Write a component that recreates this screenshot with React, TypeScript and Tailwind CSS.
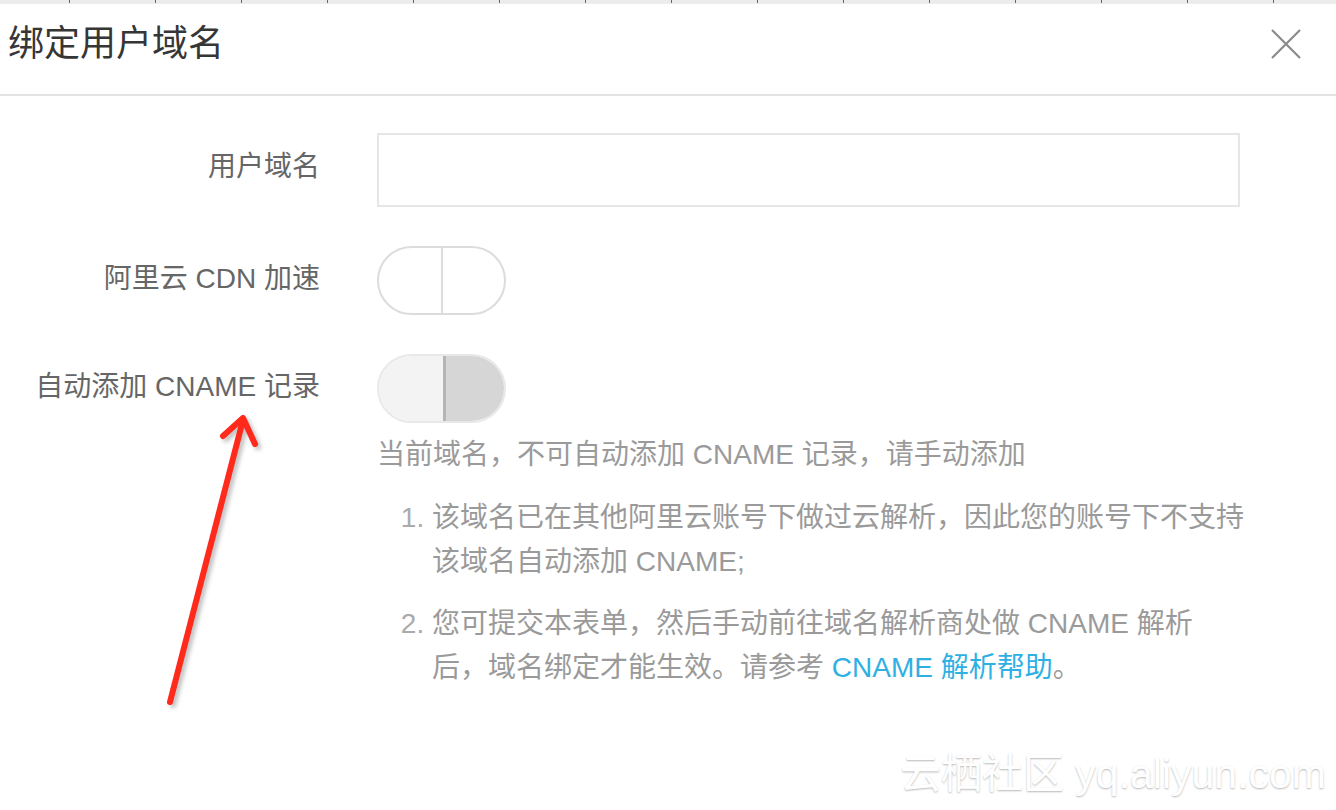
import React from 'react';

const TICKS = Array.from({ length: 15 });

const Toggle: React.FC<{ disabled?: boolean }> = ({ disabled }) => {
  if (disabled) {
    return (
      <div className="flex h-[69px] w-[129px] overflow-hidden rounded-full border-2 border-[#e8e8e8]">
        <div className="w-[64px] bg-[#f3f3f3]" />
        <div className="w-[3px] bg-[#b5b5b5]" />
        <div className="flex-1 bg-[#d6d6d6]" />
      </div>
    );
  }
  return (
    <div className="flex h-[69px] w-[129px] overflow-hidden rounded-full border-2 border-[#dcdcdc] bg-white">
      <div className="w-[64px] border-r-2 border-[#dcdcdc]" />
      <div className="flex-1" />
    </div>
  );
};

const App: React.FC = () => {
  return (
    <div className="relative h-[810px] w-[1336px] overflow-hidden bg-white font-['Liberation_Sans','Noto_Sans_CJK_SC',sans-serif]">
      {/* top strip */}
      <div className="flex h-[4px] gap-[85px] bg-[#ececec] pl-[69px]">
        {TICKS.map((_, i) => (
          <div key={i} className="h-[3px] w-px bg-[#666]" />
        ))}
      </div>

      {/* Header */}
      <div className="flex h-[92px] items-start justify-between border-b-2 border-[#e3e3e3] pl-[8px] pr-[35px] pt-[16px]">
        <h1 className="text-[36px] leading-[48px] font-normal text-[#363636]">绑定用户域名</h1>
        <button className="mt-[9px] text-[#8a8a8a]">
          <svg width="30" height="30" viewBox="0 0 30 30" fill="none" stroke="currentColor" strokeWidth="2.2">
            <path d="M1 1 L29 29 M29 1 L1 29" />
          </svg>
        </button>
      </div>

      {/* Form */}
      <div className="grid grid-cols-[320px_863px] gap-x-[57px] gap-y-[39px] pt-[37px] text-[28px]">
        <div className="flex h-[74px] items-center justify-end pb-[6px] text-[#666]">用户域名</div>
        <input className="h-[74px] w-full border-2 border-[#e6e6e6] bg-white px-4 outline-none" />

        <div className="flex h-[69px] items-center justify-end pb-[4px] text-[#666]">阿里云 CDN 加速</div>
        <div>
          <Toggle />
        </div>

        <div className="flex h-[69px] items-center justify-end pb-[4px] text-[#666]">自动添加 CNAME 记录</div>
        <div>
          <Toggle disabled />
          <p className="mt-[10px] leading-[44px] text-[#9a9a9a]">当前域名，不可自动添加 CNAME 记录，请手动添加</p>
          <ol className="mt-[19px] w-[869px] list-decimal space-y-[18px] pl-[55px] leading-[44px] text-[#9a9a9a] marker:text-[#aaa]">
            <li>该域名已在其他阿里云账号下做过云解析，因此您的账号下不支持该域名自动添加 CNAME;</li>
            <li>
              您可提交本表单，然后手动前往域名解析商处做 CNAME 解析后，域名绑定才能生效。请参考{' '}
              <a className="text-[#2fb0e3]">CNAME 解析帮助</a>。
            </li>
          </ol>
        </div>
      </div>

      {/* red arrow annotation */}
      <svg
        className="pointer-events-none absolute left-0 top-0 drop-shadow-[3px_3px_2px_rgba(0,0,0,0.25)]"
        width="1336"
        height="810"
        fill="none"
        stroke="#ff2a1c"
        strokeWidth="6"
        strokeLinecap="round"
        strokeLinejoin="round"
      >
        <path d="M170 702 L243 420" />
        <path d="M223 436 L243 418 L255 444" />
      </svg>

      {/* watermark */}
      <div className="pointer-events-none absolute bottom-[12px] right-[10px] text-[41px] leading-[48px] text-white [text-shadow:0_1px_2px_rgba(0,0,0,0.28)]">
        云栖社区 yq.aliyun.com
      </div>
    </div>
  );
};

export default App;
